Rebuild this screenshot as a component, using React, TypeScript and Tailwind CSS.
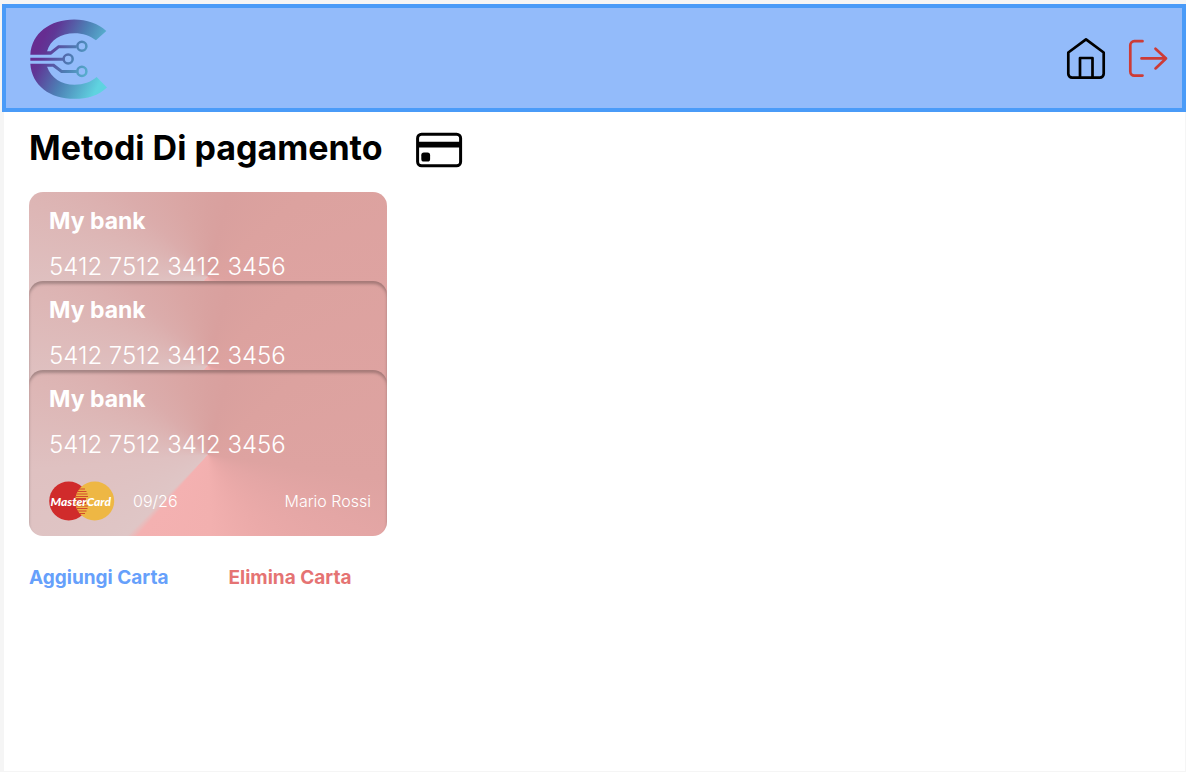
type Card = {
  id: number;
  bank: string;
  number: string;
  expiry: string;
  holder: string;
};

const cards: Card[] = [
  { id: 1, bank: "My bank", number: "5412 7512 3412 3456", expiry: "09/26", holder: "Mario Rossi" },
  { id: 2, bank: "My bank", number: "5412 7512 3412 3456", expiry: "09/26", holder: "Mario Rossi" },
  { id: 3, bank: "My bank", number: "5412 7512 3412 3456", expiry: "09/26", holder: "Mario Rossi" },
];

function Logo() {
  return (
    <svg viewBox="0 0 230 238" className="h-20 w-[77px]" aria-hidden="true">
      <defs>
        <linearGradient id="logo-fill" gradientUnits="userSpaceOnUse" x1="25" y1="85" x2="215" y2="175">
          <stop offset="0" stopColor="#662d91" />
          <stop offset="0.12" stopColor="#5f3796" />
          <stop offset="0.5" stopColor="#4d7fb5" />
          <stop offset="1" stopColor="#5fd3e0" />
        </linearGradient>
      </defs>
      <g fill="url(#logo-fill)">
        <path d="M1 106C5 42 60 1 132 1c38 0 71 12 96 34l-31 28c-18-14-39-21-64-21-41 0-72 19-82 54h10l23-18h55v9H87l-24 19z" />
        <path d="M1 133h71l24 19h44v9H93l-25-19H51c12 33 42 54 82 54 27 0 49-8 66-23l31 31c-26 24-58 34-97 34C60 238 5 198 1 133z" />
        <path d="M1 115h98v9H1z" />
      </g>
      <g fill="none" stroke="url(#logo-fill)" strokeWidth="7.5">
        <circle cx="155" cy="81" r="13.5" />
        <circle cx="114" cy="119" r="13.5" />
        <circle cx="155" cy="156" r="13.5" />
      </g>
    </svg>
  );
}

function HomeIcon() {
  return (
    <svg
      viewBox="0 1 40 44"
      className="h-11 w-10"
      fill="none"
      stroke="#000"
      strokeWidth="2.7"
      strokeLinejoin="round"
      aria-hidden="true"
    >
      <path d="M2.3 16.5 20 3.3l17.7 13.2v21.3a3.8 3.8 0 0 1-3.8 3.8H6.1a3.8 3.8 0 0 1-3.8-3.8z" />
      <path d="M14 41.5V22h12.5v19.5" />
    </svg>
  );
}

function LogoutIcon() {
  return (
    <svg
      viewBox="0 1 40 40"
      className="size-10"
      fill="none"
      stroke="#cd3b36"
      strokeWidth="2.7"
      strokeLinecap="round"
      strokeLinejoin="round"
      aria-hidden="true"
    >
      <path d="M14.5 3.2H6.3A4 4 0 0 0 2.3 7.2v26.4a4 4 0 0 0 4 4h8.2" />
      <path d="M13.5 20.4H38M27.5 10.7 38 20.4 27.5 30.4" />
    </svg>
  );
}

function CardIcon() {
  return (
    <svg viewBox="0 0 48 36" className="h-9 w-12" aria-hidden="true">
      <rect x="2.6" y="2.2" width="43" height="31.6" rx="4" fill="none" stroke="#000" strokeWidth="3" />
      <path d="M2 9.8h44v5.6H2z" />
      <rect x="6.3" y="20.6" width="8.8" height="9" rx="2.6" />
    </svg>
  );
}

function MasterCardLogo() {
  return (
    <svg viewBox="0 0 66 40" className="h-10 w-[66px]" role="img" aria-label="MasterCard">
      <circle cx="19.7" cy="20" r="19.5" fill="#d02b2b" />
      <circle cx="45.7" cy="20" r="19.5" fill="#eeb744" />
      <path
        d="M30 8h6M28.5 10.5h9M27.5 13h11M27 15.5h12M27 25h12M27.5 27.5h11M28.5 30h9M30 32.5h6"
        stroke="#d24a2d"
        strokeWidth="1.2"
      />
      <path d="M27 17h10v6H27z" fill="#d2402d" />
      <text
        x="1.5"
        y="24.5"
        fill="#fff"
        fontFamily="Lato, sans-serif"
        fontSize="12"
        fontWeight="900"
        fontStyle="italic"
      >
        MasterCard
      </text>
    </svg>
  );
}

function PaymentCard({ card, expanded }: { card: Card; expanded: boolean }) {
  return (
    <li className="flex h-[166px] flex-col rounded-[14px] bg-[conic-gradient(from_0deg_at_50%_51%,#d9a2a0_0deg,#d9a09e_14deg,#dca29f_50deg,#dea3a1_98deg,#e4a6a5_116deg,#ebaaa9_145deg,#f2b0af_178deg,#f4b1b1_221deg,#dfc6c6_225deg,#dfc1c1_265deg,#ddb6b5_292deg,#dbacab_315deg,#daa6a4_340deg,#d9a2a0_360deg)] pr-4 pl-5 text-white not-first:-mt-[77px] not-first:shadow-[inset_0_3px_3px_rgba(0,0,0,0.25)]">
      <h2 className="pt-[13px] text-[23px] leading-8 font-bold">{card.bank}</h2>
      <p className="mt-3.5 text-2xl leading-8 font-light">{card.number}</p>
      {expanded && (
        <div className="mt-5 flex items-center text-base font-light">
          <MasterCardLogo />
          <span className="ml-[18px]">{card.expiry}</span>
          <span className="ml-auto">{card.holder}</span>
        </div>
      )}
    </li>
  );
}

export default function App() {
  return (
    <div className="flex min-h-screen flex-col bg-[#f5f5f5] pt-1 font-['Inter',sans-serif]">
      <header className="ml-0.5 flex items-center justify-between border-4 border-[#4a9bf8] bg-[#93bbfa] pt-[11px] pr-3.5 pb-[9px] pl-6">
        <a href="#top" aria-label="Home page">
          <Logo />
        </a>
        <nav className="flex items-center gap-[22px]">
          <a href="#home" aria-label="Home">
            <HomeIcon />
          </a>
          <button type="button" aria-label="Esci">
            <LogoutIcon />
          </button>
        </nav>
      </header>

      <main className="mr-px mb-px ml-1 flex-1 bg-white px-[25px] pt-3">
        <div className="flex items-end gap-8">
          <h1 className="text-[34px] leading-12 font-bold">Metodi Di pagamento</h1>
          <div className="pb-1">
            <CardIcon />
          </div>
        </div>

        <ul className="mt-5 flex w-[358px] flex-col">
          {cards.map((card, index) => (
            <PaymentCard key={card.id} card={card} expanded={index === cards.length - 1} />
          ))}
        </ul>

        <div className="mt-7 flex gap-[60px] text-[19px] leading-7 font-bold">
          <button type="button" className="text-[#66a0fb]">
            Aggiungi Carta
          </button>
          <button type="button" className="text-[#e57373]">
            Elimina Carta
          </button>
        </div>
      </main>
    </div>
  );
}
